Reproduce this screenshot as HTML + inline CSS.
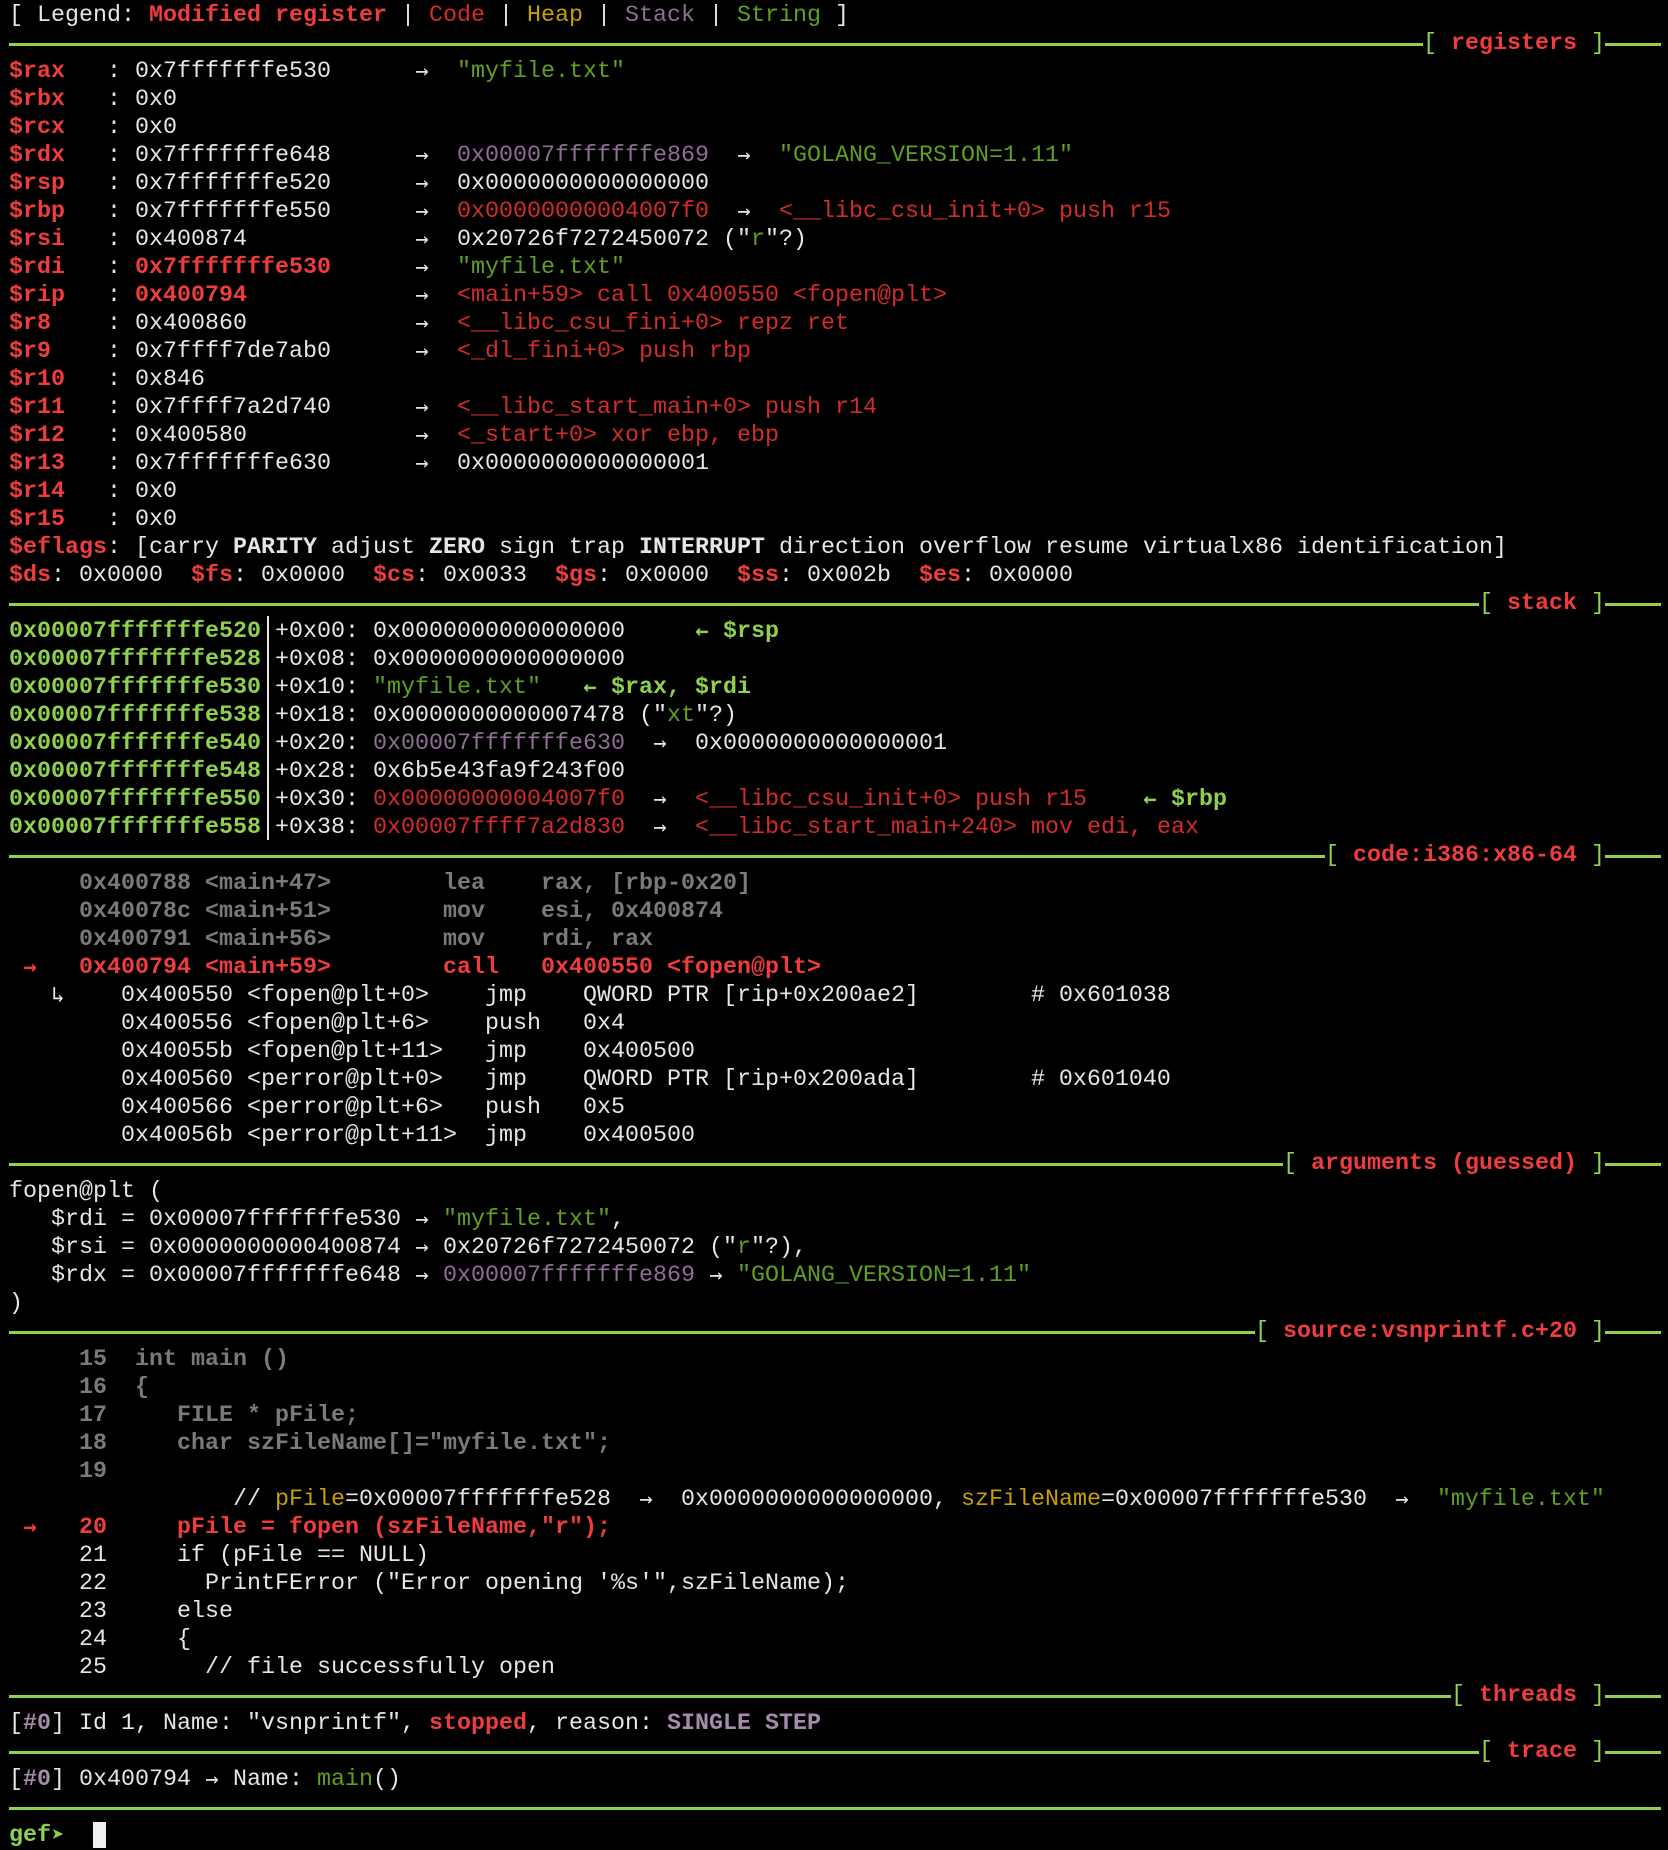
<!DOCTYPE html>
<html><head><meta charset="utf-8">
<style>
html,body{margin:0;padding:0;background:#000;}
body{width:1668px;height:1848px;overflow:hidden;position:relative;}
#t{position:absolute;left:9px;top:2px;width:1652px;font-family:"Liberation Mono","DejaVu Sans Mono",monospace;font-size:23.33px;color:#e6e6e6;}
.l{height:28px;line-height:28px;white-space:pre;overflow:hidden;}
.s{height:28px;line-height:28px;white-space:pre;display:flex;align-items:center;}
.s .ln{flex:1;height:3px;background:#8fd14f;}
.s .le{width:56px;height:3px;background:#8fd14f;}
.b{font-weight:bold}
.r{color:#ef3d3d;font-weight:bold}
.c{color:#d42b2b}
.y{color:#c4a000}
.p{color:#8e6f93}
.g{color:#5fa020}
.G{color:#8fd14f;font-weight:bold}
.gn{color:#8fd14f}
.gr{color:#7a7a7a;font-weight:bold}
.pb{color:#a68cac;font-weight:bold}
i{font-style:normal;font-family:"DejaVu Sans Mono",monospace;font-size:22px;display:inline-block;width:14px;height:28px;line-height:28px;vertical-align:top;text-align:center;overflow:visible;}
#bar{position:absolute;left:267px;top:616px;width:2px;height:224px;background:#e6e6e6;}
#cur{position:absolute;left:93px;top:1822px;width:13px;height:26px;background:#f0f0f0;}
</style></head><body>
<div id="t">
<div class="l">[ Legend: <span class="r">Modified register</span> | <span class="c">Code</span> | <span class="y">Heap</span> | <span class="p">Stack</span> | <span class="g">String</span> ]</div>
<div class="s"><span class="ln"></span><span class="tt"><span class="gn">[ </span><span class="r">registers</span><span class="gn"> ]</span></span><span class="le"></span></div>
<div class="l"><span class="r">$rax</span>   : 0x7fffffffe530      <i>→</i>  <span class="g">"myfile.txt"</span></div>
<div class="l"><span class="r">$rbx</span>   : 0x0</div>
<div class="l"><span class="r">$rcx</span>   : 0x0</div>
<div class="l"><span class="r">$rdx</span>   : 0x7fffffffe648      <i>→</i>  <span class="p">0x00007fffffffe869</span>  <i>→</i>  <span class="g">"GOLANG_VERSION=1.11"</span></div>
<div class="l"><span class="r">$rsp</span>   : 0x7fffffffe520      <i>→</i>  0x0000000000000000</div>
<div class="l"><span class="r">$rbp</span>   : 0x7fffffffe550      <i>→</i>  <span class="c">0x00000000004007f0</span>  <i>→</i>  <span class="c">&lt;__libc_csu_init+0&gt; push r15</span></div>
<div class="l"><span class="r">$rsi</span>   : 0x400874            <i>→</i>  0x20726f7272450072 ("<span class="g">r</span>"?)</div>
<div class="l"><span class="r">$rdi</span>   : <span class="r">0x7fffffffe530</span>      <i>→</i>  <span class="g">"myfile.txt"</span></div>
<div class="l"><span class="r">$rip</span>   : <span class="r">0x400794</span>            <i>→</i>  <span class="c">&lt;main+59&gt; call 0x400550 &lt;fopen@plt&gt;</span></div>
<div class="l"><span class="r">$r8</span>    : 0x400860            <i>→</i>  <span class="c">&lt;__libc_csu_fini+0&gt; repz ret</span></div>
<div class="l"><span class="r">$r9</span>    : 0x7ffff7de7ab0      <i>→</i>  <span class="c">&lt;_dl_fini+0&gt; push rbp</span></div>
<div class="l"><span class="r">$r10</span>   : 0x846</div>
<div class="l"><span class="r">$r11</span>   : 0x7ffff7a2d740      <i>→</i>  <span class="c">&lt;__libc_start_main+0&gt; push r14</span></div>
<div class="l"><span class="r">$r12</span>   : 0x400580            <i>→</i>  <span class="c">&lt;_start+0&gt; xor ebp, ebp</span></div>
<div class="l"><span class="r">$r13</span>   : 0x7fffffffe630      <i>→</i>  0x0000000000000001</div>
<div class="l"><span class="r">$r14</span>   : 0x0</div>
<div class="l"><span class="r">$r15</span>   : 0x0</div>
<div class="l"><span class="r">$eflags</span>: [carry <span class="b">PARITY</span> adjust <span class="b">ZERO</span> sign trap <span class="b">INTERRUPT</span> direction overflow resume virtualx86 identification]</div>
<div class="l"><span class="r">$ds</span>: 0x0000  <span class="r">$fs</span>: 0x0000  <span class="r">$cs</span>: 0x0033  <span class="r">$gs</span>: 0x0000  <span class="r">$ss</span>: 0x002b  <span class="r">$es</span>: 0x0000</div>
<div class="s"><span class="ln"></span><span class="tt"><span class="gn">[ </span><span class="r">stack</span><span class="gn"> ]</span></span><span class="le"></span></div>
<div class="l"><span class="G">0x00007fffffffe520</span> +0x00: 0x0000000000000000     <span class="G"><i>←</i> $rsp</span></div>
<div class="l"><span class="G">0x00007fffffffe528</span> +0x08: 0x0000000000000000</div>
<div class="l"><span class="G">0x00007fffffffe530</span> +0x10: <span class="g">"myfile.txt"</span>   <span class="G"><i>←</i> $rax, $rdi</span></div>
<div class="l"><span class="G">0x00007fffffffe538</span> +0x18: 0x0000000000007478 ("<span class="g">xt</span>"?)</div>
<div class="l"><span class="G">0x00007fffffffe540</span> +0x20: <span class="p">0x00007fffffffe630</span>  <i>→</i>  0x0000000000000001</div>
<div class="l"><span class="G">0x00007fffffffe548</span> +0x28: 0x6b5e43fa9f243f00</div>
<div class="l"><span class="G">0x00007fffffffe550</span> +0x30: <span class="c">0x00000000004007f0</span>  <i>→</i>  <span class="c">&lt;__libc_csu_init+0&gt; push r15</span>    <span class="G"><i>←</i> $rbp</span></div>
<div class="l"><span class="G">0x00007fffffffe558</span> +0x38: <span class="c">0x00007ffff7a2d830</span>  <i>→</i>  <span class="c">&lt;__libc_start_main+240&gt; mov edi, eax</span></div>
<div class="s"><span class="ln"></span><span class="tt"><span class="gn">[ </span><span class="r">code:i386:x86-64</span><span class="gn"> ]</span></span><span class="le"></span></div>
<div class="l gr">     0x400788 &lt;main+47&gt;        lea    rax, [rbp-0x20]</div>
<div class="l gr">     0x40078c &lt;main+51&gt;        mov    esi, 0x400874</div>
<div class="l gr">     0x400791 &lt;main+56&gt;        mov    rdi, rax</div>
<div class="l r"> <i>→</i>   0x400794 &lt;main+59&gt;        call   0x400550 &lt;fopen@plt&gt;</div>
<div class="l">   <i>↳</i>    0x400550 &lt;fopen@plt+0&gt;    jmp    QWORD PTR [rip+0x200ae2]        # 0x601038</div>
<div class="l">        0x400556 &lt;fopen@plt+6&gt;    push   0x4</div>
<div class="l">        0x40055b &lt;fopen@plt+11&gt;   jmp    0x400500</div>
<div class="l">        0x400560 &lt;perror@plt+0&gt;   jmp    QWORD PTR [rip+0x200ada]        # 0x601040</div>
<div class="l">        0x400566 &lt;perror@plt+6&gt;   push   0x5</div>
<div class="l">        0x40056b &lt;perror@plt+11&gt;  jmp    0x400500</div>
<div class="s"><span class="ln"></span><span class="tt"><span class="gn">[ </span><span class="r">arguments (guessed)</span><span class="gn"> ]</span></span><span class="le"></span></div>
<div class="l">fopen@plt (</div>
<div class="l">   $rdi = 0x00007fffffffe530 <i>→</i> <span class="g">"myfile.txt"</span>,</div>
<div class="l">   $rsi = 0x0000000000400874 <i>→</i> 0x20726f7272450072 ("<span class="g">r</span>"?),</div>
<div class="l">   $rdx = 0x00007fffffffe648 <i>→</i> <span class="p">0x00007fffffffe869</span> <i>→</i> <span class="g">"GOLANG_VERSION=1.11"</span></div>
<div class="l">)</div>
<div class="s"><span class="ln"></span><span class="tt"><span class="gn">[ </span><span class="r">source:vsnprintf.c+20</span><span class="gn"> ]</span></span><span class="le"></span></div>
<div class="l gr">     15  int main ()</div>
<div class="l gr">     16  {</div>
<div class="l gr">     17     FILE * pFile;</div>
<div class="l gr">     18     char szFileName[]="myfile.txt";</div>
<div class="l gr">     19</div>
<div class="l">                // <span class="y">pFile</span>=0x00007fffffffe528  <i>→</i>  0x0000000000000000, <span class="y">szFileName</span>=0x00007fffffffe530  <i>→</i>  <span class="g">"myfile.txt"</span></div>
<div class="l r"> <i>→</i>   20     pFile = fopen (szFileName,"r");</div>
<div class="l">     21     if (pFile == NULL)</div>
<div class="l">     22       PrintFError ("Error opening '%s'",szFileName);</div>
<div class="l">     23     else</div>
<div class="l">     24     {</div>
<div class="l">     25       // file successfully open</div>
<div class="s"><span class="ln"></span><span class="tt"><span class="gn">[ </span><span class="r">threads</span><span class="gn"> ]</span></span><span class="le"></span></div>
<div class="l">[<span class="pb">#0</span>] Id 1, Name: "vsnprintf", <span class="r">stopped</span>, reason: <span class="pb">SINGLE STEP</span></div>
<div class="s"><span class="ln"></span><span class="tt"><span class="gn">[ </span><span class="r">trace</span><span class="gn"> ]</span></span><span class="le"></span></div>
<div class="l">[<span class="pb">#0</span>] 0x400794 <i>→</i> Name: <span class="g">main</span>()</div>
<div class="s"><span class="ln"></span></div>
<div class="l"><span class="G">gef<i>➤</i></span>  </div>
</div>
<div id="bar"></div>
<div id="cur"></div>
</body></html>
